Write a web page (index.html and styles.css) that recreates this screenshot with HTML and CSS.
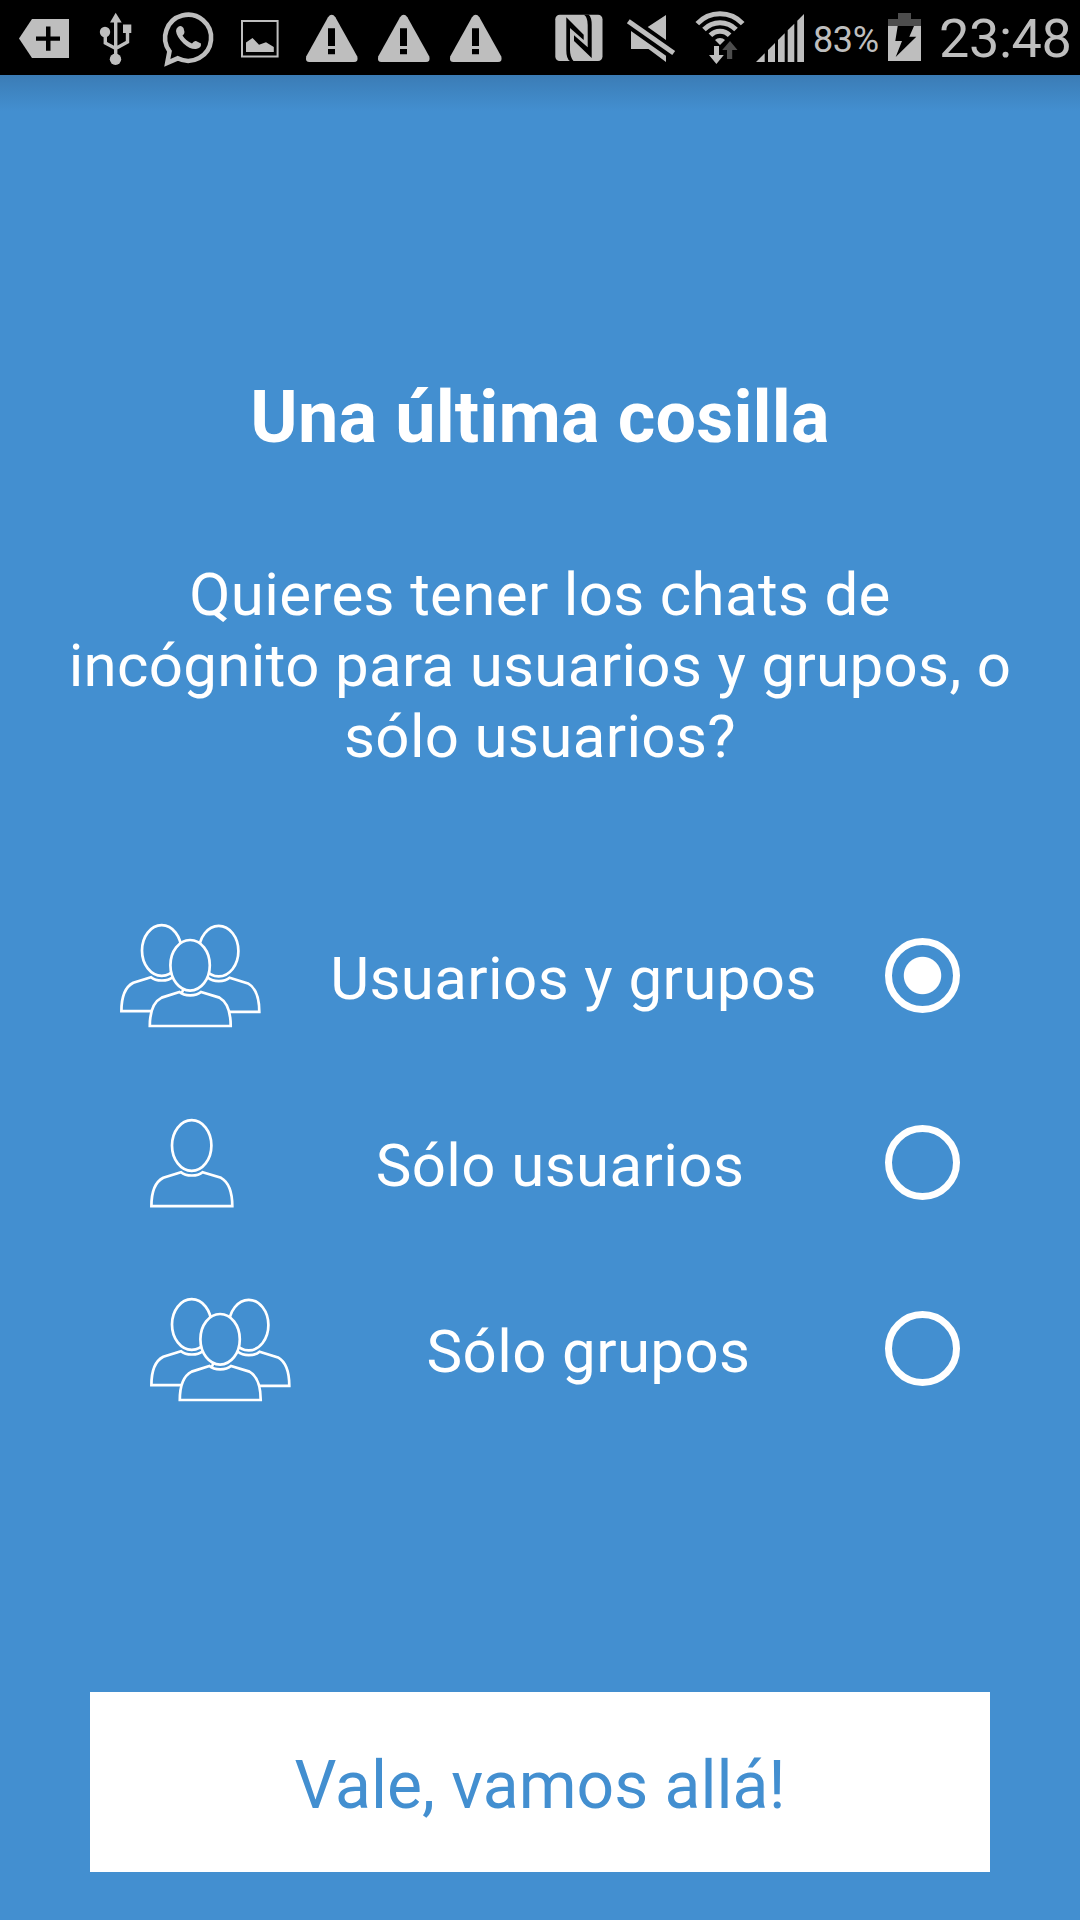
FILE: index.html
```html
<!DOCTYPE html>
<html lang="es">

<head>
    <meta charset="UTF-8">
    <meta name="viewport" content="width=device-width, initial-scale=1.0">
    <title>Una última cosilla</title>
    <link rel="stylesheet" href="styles.css">
</head>

<body>
    <div class="status-bar">
        <svg class="icon" width="72" height="75" viewBox="8 0 72 75">
            <path d="M19 38.5L32 19H69V58H32Z" />
            <path class="cut" d="M46 26.5h4.5v10h9.5v4.3h-9.5v10H46v-10H36v-4.3h10Z" />
        </svg>
        <svg class="icon" width="72" height="75" viewBox="80 0 72 75">
            <path d="M115.7 12.7L121.7 22.5H110Z" />
            <circle cx="115.5" cy="59.3" r="5.7" />
            <circle cx="105" cy="32" r="5.2" />
            <path d="M123 24.5h8.3V33H123Z" />
            <path class="line" stroke-width="3.4" d="M115.7 20V58M105.3 33V43L115.7 48.5M127.5 32V42L115.7 48.5" />
        </svg>
        <svg class="icon" width="72" height="75" viewBox="152 0 72 75">
            <path class="line" stroke-width="4.6" d="M167.3 62.8L169.5 51.3A23 23 0 1 1 177.7 58.3Z" />
            <path d="M178 27Q181 24.5 183.5 28L184.5 32Q184.5 34 182.5 35.5Q186 41 192 43.5Q194 40.5 196 41L201 43.5Q201.5 48 196 49Q190 49.5 183.5 43.5Q176.5 36.5 176 31Q176 28.5 178 27Z" />
        </svg>
        <svg class="icon" width="72" height="75" viewBox="224 0 72 75">
            <path class="line" stroke-width="2" d="M242 21H277.6V56.6H242Z" />
            <path d="M246 52V42.5L252.5 38L259 44.7L266 42.2L273.8 47V52Z" />
        </svg>
        <svg class="icon" width="72" height="75" viewBox="296 0 72 75">
            <path d="M328 17.2Q331.7 12.5 335.4 17.2L357.3 56.5Q358.6 62 354 62H309.5Q305 62 306.2 56.5Z" />
            <path class="cut" d="M328 28.3h7V46h-7ZM328 49h7v5.2h-7Z" />
        </svg>
        <svg class="icon" width="72" height="75" viewBox="296 0 72 75">
            <path d="M328 17.2Q331.7 12.5 335.4 17.2L357.3 56.5Q358.6 62 354 62H309.5Q305 62 306.2 56.5Z" />
            <path class="cut" d="M328 28.3h7V46h-7ZM328 49h7v5.2h-7Z" />
        </svg>
        <svg class="icon" width="72" height="75" viewBox="296 0 72 75">
            <path d="M328 17.2Q331.7 12.5 335.4 17.2L357.3 56.5Q358.6 62 354 62H309.5Q305 62 306.2 56.5Z" />
            <path class="cut" d="M328 28.3h7V46h-7ZM328 49h7v5.2h-7Z" />
        </svg>
        <!-- nfc -->
        <svg class="icon push" width="72" height="75" viewBox="543 0 72 75">
            <rect x="555.3" y="14.7" width="47.2" height="46.3" rx="4.5" />
            <path class="cut" d="M566.3 17.3L583.7 34.7V40L570 28V50Q570 57 573.5 61H570Q566.3 59 566.3 50ZM591.7 58L574 41V35.3L587.7 47.3V25Q587.7 17 584 14.7H588.7Q591.7 17.3 591.7 25Z" />
        </svg>
        <!-- muted speaker -->
        <svg class="icon" width="72" height="75" viewBox="615 0 72 75">
            <path d="M631 31L666 55.8V62L648.5 49H631ZM666 15V40L647.7 27Z" />
            <path class="line" stroke-width="5" d="M628.3 21.2L673.7 53" />
        </svg>
        <!-- wifi -->
        <svg class="icon" width="66" height="75" viewBox="687 0 66 75">
            <path class="line" stroke-width="5" d="M697.3 23.6A31 31 0 0 1 742.7 23.6M704 29.4A22.3 22.3 0 0 1 736 29.4M710.4 35.3A13.2 13.2 0 0 1 729.6 35.3" />
            <path d="M720 45L715 40A7 7 0 0 1 725 40Z" />
            <path d="M714 46h5v9h4.8L716.4 64L709 55h5Z" />
            <path class="dim" d="M730 41L737.5 50H732.2V59H727V50H722.2Z" />
        </svg>
        <!-- signal -->
        <svg class="icon" width="54" height="75" viewBox="753 0 54 75">
            <path d="M756 62L764.7 53.3V62ZM768 62V50L775 43V62ZM778 62V40L784.7 33.3V62ZM787.7 62V30.3L794.3 23.7V62ZM797.3 62V20.7L804 14V62Z" />
        </svg>
        <span class="battery-level">83%</span>
        <svg class="icon" width="33" height="75" viewBox="888 0 33 75">
            <path class="dim" d="M898 13h13v6h10v7h-33v-7h10Z" />
            <path d="M888 26h33v35h-33Z" />
            <path class="cut" d="M897.7 26H914L909.3 36.7H916.3L895.7 57L902 41H895.3Z" />
        </svg>
        <span class="clock">23:48</span>
    </div>

    <div class="screen">
        <h1>Una última cosilla</h1>
        <p class="question">Quieres tener los chats de<br>incógnito para usuarios y grupos, o<br>sólo usuarios?</p>

        <div class="options">
            <label class="option">
                <svg class="people" width="142" height="104" viewBox="0 0 142 104">
                    <g id="person">
                        <path d="M1.4 87.2C1.4 72 6 62.5 13.3 58.8L31 53.2C36 57.6 47.6 57.6 52.6 53.2L71 58.8C77.5 62.5 82.3 72 82.3 87.2Z" />
                        <ellipse cx="41.7" cy="26.5" rx="19.7" ry="25.3" />
                    </g>
                    <use href="#person" x="57" y="0.6" />
                    <use href="#person" x="28.4" y="14.8" />
                </svg>
                <span class="option-text">Usuarios y grupos</span>
                <input class="radio" type="radio" name="mode" checked>
            </label>
            <label class="option indent">
                <svg class="people single" width="85" height="104" viewBox="0 0 85 104">
                    <use href="#person" />
                </svg>
                <span class="option-text">Sólo usuarios</span>
                <input class="radio" type="radio" name="mode">
            </label>
            <label class="option indent">
                <svg class="people" width="142" height="104" viewBox="0 0 142 104">
                    <use href="#person" />
                    <use href="#person" x="57" y="0.6" />
                    <use href="#person" x="28.4" y="14.8" />
                </svg>
                <span class="option-text">Sólo grupos</span>
                <input class="radio" type="radio" name="mode">
            </label>
        </div>

        <button class="accept" type="button">Vale, vamos allá!</button>
    </div>
</body>

</html>
```
FILE: styles.css
```css
* {
    box-sizing: border-box;
}

body {
    display: flex;
    flex-direction: column;
    width: 1080px;
    height: 1920px;
    margin: 0;
    overflow: hidden;
    background-color: #438fd0;
    font-family: Roboto, sans-serif;
    color: white;
}

.status-bar {
    display: flex;
    height: 75px;
    padding-left: 8px;
    background-color: black;
    color: #bebebe;
}

.icon {
    flex: none;
    fill: #bebebe;
}

.push {
    margin-left: 31px;
}

.cut {
    fill: black;
}

.dim {
    fill: #4d4d4d;
}

.line {
    fill: none;
    stroke: #bebebe;
}

.battery-level {
    width: 81px;
    padding-left: 6px;
    font-size: 36px;
    line-height: 80px;
    letter-spacing: -0.4px;
}

.clock {
    padding-left: 18px;
    font-size: 54px;
    line-height: 78px;
    letter-spacing: -0.4px;
}

.screen {
    flex: 1;
    display: flex;
    flex-direction: column;
    align-items: center;
    padding-bottom: 48px;
    background: linear-gradient(rgba(40, 80, 120, 0.3), rgba(67, 143, 208, 0) 36px);
}

h1 {
    margin: 301px 0 0;
    font-size: 72px;
    line-height: 84px;
    font-weight: bold;
    letter-spacing: 0.15px;
}

.question {
    margin: 99px 0 0;
    font-size: 60px;
    line-height: 71px;
    letter-spacing: 0.34px;
    text-align: center;
    white-space: nowrap;
}

.options {
    width: 840px;
    margin-top: 110px;
}

.option {
    display: flex;
    align-items: center;
    height: 186.7px;
}

.indent {
    padding-left: 30px;
}

.people {
    flex: none;
    margin-top: 2px;
    overflow: visible;
    fill: #438fd0;
    stroke: white;
    stroke-width: 2.7px;
}

.single {
    margin-top: 17px;
}

.option-text {
    flex: 1;
    padding-top: 6px;
    font-size: 60px;
    line-height: 71px;
    letter-spacing: 0.4px;
    text-align: center;
}

.radio {
    flex: none;
    appearance: none;
    width: 75px;
    height: 75px;
    margin: 0;
    border: 7px solid white;
    border-radius: 50%;
}

.radio:checked {
    background: radial-gradient(circle, white 18.2px, transparent 19.2px);
}

.accept {
    width: 900px;
    height: 180px;
    margin-top: auto;
    padding: 6px 0 0;
    border: none;
    background-color: white;
    color: #438fd0;
    font-family: inherit;
    font-size: 66px;
}
```
